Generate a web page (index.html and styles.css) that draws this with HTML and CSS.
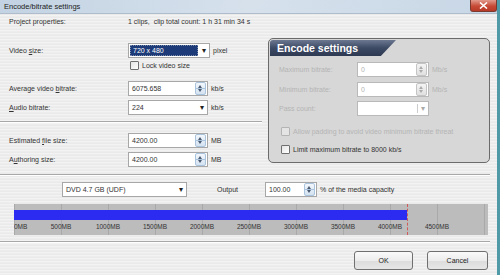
FILE: index.html
```html
<!DOCTYPE html>
<html lang="en">
<head>
    <meta charset="UTF-8">
    <title>Encode/bitrate settings</title>
    <link rel="stylesheet" href="styles.css">
</head>
<body>
    <div class="window">
        <div class="titlebar">
            <span class="title">Encode/bitrate settings</span>
            <span class="close">
                <svg width="9" height="7" viewBox="0 0 9 7"><path d="M1 0.5 L8 6.5 M8 0.5 L1 6.5" stroke="#fff" stroke-width="1.6"/></svg>
            </span>
        </div>

        <div class="content">
            <div class="row project">
                <span class="label">Project properties:</span>
                <span>1 clips,&nbsp; clip total count: 1 h 31 min 34 s</span>
            </div>

            <div class="columns">
                <!-- Left column: size and bitrate fields -->
                <div class="left">
                    <div class="row r-video">
                        <span class="label">Video <u>s</u>ize:</span>
                        <div class="select active">
                            <span class="value">720 x 480</span>
                            <span class="arrow">&#9662;</span>
                        </div>
                        <span class="unit">pixel</span>
                    </div>
                    <div class="row r-lock">
                        <span class="label"></span>
                        <label class="check"><span class="box"></span>Lock video size</label>
                    </div>
                    <div class="row r-avg">
                        <span class="label">Average video <u>b</u>itrate:</span>
                        <div class="spin"><span class="value">6075.658</span><span class="spinner"></span></div>
                        <span class="unit">kb/s</span>
                    </div>
                    <div class="row r-audio">
                        <span class="label"><u>A</u>udio bitrate:</span>
                        <div class="select"><span class="value">224</span><span class="arrow">&#9662;</span></div>
                        <span class="unit">kb/s</span>
                    </div>
                    <div class="divider short"></div>
                    <div class="row r-est">
                        <span class="label">Estimated <u>f</u>ile size:</span>
                        <div class="spin"><span class="value">4200.00</span><span class="spinner"></span></div>
                        <span class="unit">MB</span>
                    </div>
                    <div class="row r-auth">
                        <span class="label">A<u>u</u>thoring size:</span>
                        <div class="spin"><span class="value">4200.00</span><span class="spinner"></span></div>
                        <span class="unit">MB</span>
                    </div>
                </div>

                <!-- Right panel: encode settings -->
                <div class="panel">
                    <div class="panel-head">Encode settings</div>
                    <div class="prow p-max">
                        <span class="plabel">Maximum bitrate:</span>
                        <div class="spin disabled"><span class="value">0</span><span class="spinner"></span></div>
                        <span class="unit">Mb/s</span>
                    </div>
                    <div class="prow p-min">
                        <span class="plabel">Minimum bitrate:</span>
                        <div class="spin disabled"><span class="value">0</span><span class="spinner"></span></div>
                        <span class="unit">Mb/s</span>
                    </div>
                    <div class="prow p-pass">
                        <span class="plabel">Pass count:</span>
                        <div class="select disabled"><span class="value"></span><span class="arrow">&#9662;</span></div>
                    </div>
                    <label class="check pcheck disabled c-pad"><span class="box"></span>Allow padding to avoid video minimum bitrate threat</label>
                    <label class="check pcheck c-limit"><span class="box"></span>Limit maximum bitrate to 8000 kb/s</label>
                </div>
            </div>

            <div class="divider"></div>

            <div class="output-row">
                <div class="select disc"><span class="value">DVD 4.7 GB (UDF)</span><span class="arrow">&#9662;</span></div>
                <span class="out-label">Output</span>
                <div class="spin pct"><span class="value">100.00</span><span class="spinner"></span></div>
                <span class="unit">% of the media capacity</span>
            </div>

            <div class="chart">
                <div class="ticks top"></div>
                <div class="bar" style="width: 393px"></div>
                <div class="scale">
                    <span>0MB</span><span>500MB</span><span>1000MB</span><span>1500MB</span><span>2000MB</span>
                    <span>2500MB</span><span>3000MB</span><span>3500MB</span><span>4000MB</span><span>4500MB</span>
                </div>
                <div class="marker"></div>
            </div>

            <div class="divider bottom"></div>

            <div class="buttons">
                <button class="btn ok">OK</button>
                <button class="btn cancel">Cancel</button>
            </div>
        </div>
    </div>
</body>
</html>
```

FILE: styles.css
```css
/* General styling */
body {
    margin: 0;
    padding: 0;
    font-family: 'Liberation Sans', Arial, sans-serif;
    font-size: 7px;
    color: #333;
}

.window {
    width: 497px;
    height: 275px;
    border-right: 3px solid #4f9aa6;
    background-color: #ececec;
    background-image: repeating-linear-gradient(180deg, rgba(255,255,255,0.35) 0px, rgba(255,255,255,0.35) 1px, rgba(0,0,0,0.02) 2px, rgba(0,0,0,0) 3px);
    overflow: hidden;
}

/* Title bar */
.titlebar {
    height: 13px;
    display: flex;
    justify-content: space-between;
    align-items: flex-start;
    background: linear-gradient(90deg, #c3d3e3 0%, #d6e1ec 50%, #c8d7e6 100%);
    border-bottom: 1px solid #aebccb;
}

.title {
    font-size: 7.5px;
    color: #222;
    padding: 2px 0 0 4px;
}

.close {
    width: 27px;
    height: 12px;
    display: flex;
    align-items: center;
    justify-content: center;
    background: linear-gradient(180deg, #e29a8c 0%, #c64a36 55%, #b83a28 100%);
    border: 1px solid #7a3a30;
    border-top: none;
    border-radius: 0 0 3px 3px;
    box-sizing: border-box;
}

.content {
    padding-top: 1px;
}

.row {
    display: flex;
    align-items: center;
    padding-left: 9px;
}

.label {
    width: 119px;
    flex-shrink: 0;
}

.project {
    height: 13px;
}

.columns {
    display: flex;
    margin-top: 10px;
}

.left {
    width: 268px;
    padding-top: 5px;
}

.unit {
    margin-left: 3px;
}

/* Form controls */
.select, .spin {
    height: 15px;
    width: 80px;
    display: flex;
    align-items: center;
    background: #fff;
    border: 1px solid #a7a7a7;
    box-sizing: border-box;
}

.select .value, .spin .value {
    flex: 1;
    padding-left: 3px;
    white-space: nowrap;
}

.select .arrow {
    width: 10px;
    text-align: center;
    font-size: 8px;
    color: #222;
}

.select.active {
    width: 82px;
}

.select.active .value {
    background: #1c3a78;
    color: #fff;
    height: 100%;
    display: flex;
    align-items: center;
    border: 1px solid #fff;
    box-sizing: border-box;
    outline: 1px dotted #7a8aa8;
    outline-offset: -2px;
}

.spinner {
    width: 11px;
    height: 13px;
    margin-right: 1px;
    border: 1px solid #aac4de;
    border-radius: 2px;
    box-sizing: border-box;
    background:
        linear-gradient(#aac4de, #aac4de) center / 100% 1px no-repeat,
        linear-gradient(180deg, #f2f7fc, #d4e2f1);
    position: relative;
}

.spinner::before, .spinner::after {
    content: "";
    position: absolute;
    left: 2px;
    border-left: 2.5px solid transparent;
    border-right: 2.5px solid transparent;
}

.spinner::before {
    top: 2px;
    border-bottom: 3px solid #4a5a70;
}

.spinner::after {
    bottom: 2px;
    border-top: 3px solid #4a5a70;
}

.check {
    display: flex;
    align-items: center;
}

.check .box {
    width: 9px;
    height: 9px;
    margin-right: 3px;
    border: 1px solid #707070;
    border-radius: 1px;
    background: linear-gradient(135deg, #e4e4e4, #fff);
    box-sizing: border-box;
}

.r-lock {
    margin-top: 2px;
    height: 11px;
}

.r-lock .check {
    margin-left: 2px;
}

.r-avg {
    margin-top: 9px;
    height: 16px;
}

.r-audio {
    margin-top: 3px;
    height: 16px;
}

.divider {
    height: 0;
    border-top: 1px solid #a8a8a8;
    border-bottom: 1px solid #fff;
    margin-top: 7px;
    width: 490px;
}

.divider.short {
    width: 262px;
    margin: 6px 0 10px;
}

.r-est, .r-auth {
    height: 15px;
}

.r-auth {
    margin-top: 4px;
}

/* Encode settings panel */
.panel {
    width: 222px;
    height: 125px;
    box-sizing: border-box;
    border: 1px solid #6b6b6b;
    border-radius: 5px;
    background: #d7d7d7;
    padding: 1px 0 0 1px;
    color: #b4b4b4;
}

.panel-head {
    width: 126px;
    height: 16px;
    padding-left: 7px;
    box-sizing: border-box;
    display: flex;
    align-items: center;
    font-size: 10.5px;
    font-weight: bold;
    color: #fff;
    background: linear-gradient(180deg, #6c7890 0%, #3d4a64 50%, #2e3a52 100%);
    border-radius: 3px 0 0 0;
    clip-path: polygon(0 0, 100% 0, 88% 100%, 0 100%);
}

.prow {
    display: flex;
    align-items: center;
    padding-left: 9px;
    height: 15px;
}

.plabel {
    width: 78px;
    flex-shrink: 0;
}

.p-max {
    margin-top: 6px;
}

.p-min {
    margin-top: 5px;
}

.p-pass {
    margin-top: 4px;
}

.spin.disabled, .select.disabled {
    width: 72px;
    border-color: #b9b9b9;
}

.spin.disabled .spinner {
    border-color: #c4c4c4;
    background: linear-gradient(180deg, #f4f4f4, #e0e0e0);
}

.spin.disabled .spinner::before { border-bottom-color: #aaa; }
.spin.disabled .spinner::after { border-top-color: #aaa; }

.select.disabled .arrow {
    color: #aaa;
    border-left: 1px solid #ccc;
}

.pcheck {
    padding-left: 11px;
    height: 11px;
}

.pcheck.disabled .box {
    border-color: #b4b4b4;
    background: #e4e4e4;
}

.c-pad {
    margin-top: 10px;
}

.c-limit {
    margin-top: 7px;
    color: #333;
}

/* Output row */
.output-row {
    display: flex;
    align-items: center;
    margin-top: 6px;
    padding-left: 62px;
    height: 15px;
}

.select.disc {
    width: 125px;
}

.out-label {
    margin-left: 30px;
    width: 48px;
}

.spin.pct {
    width: 52px;
}

/* Capacity chart */
.chart {
    position: relative;
    margin: 7px 0 0 14px;
    width: 474px;
    height: 31px;
    background-color: #bcbcbc;
    background-image: repeating-linear-gradient(90deg, #a9a9a9 0px, #a9a9a9 1px, transparent 1px, transparent 47px);
    overflow: hidden;
}

.ticks.top {
    height: 6px;
}

.bar {
    height: 10px;
    background: #2b2bf2;
}

.scale {
    display: flex;
    padding-top: 3px;
    font-size: 6.5px;
    color: #333;
}

.scale span {
    width: 47px;
    flex-shrink: 0;
    text-align: center;
}

.scale span:first-child {
    width: 23.5px;
    text-align: left;
}

.marker {
    position: absolute;
    top: 0;
    bottom: 0;
    left: 393px;
    border-left: 1px dashed #d05a5a;
}

.divider.bottom {
    margin-top: 6px;
}

/* Buttons */
.buttons {
    display: flex;
    justify-content: flex-end;
    gap: 14px;
    padding-right: 9px;
    margin-top: 8px;
}

.btn {
    height: 19px;
    font-family: 'Liberation Sans', Arial, sans-serif;
    font-size: 7px;
    color: #222;
    border: 1px solid #707070;
    border-radius: 3px;
    background: linear-gradient(180deg, #fafafa 0%, #ececec 50%, #dcdcdc 51%, #e6e6e6 100%);
    padding: 0;
}

.btn.ok {
    width: 59px;
}

.btn.cancel {
    width: 61px;
}
```
